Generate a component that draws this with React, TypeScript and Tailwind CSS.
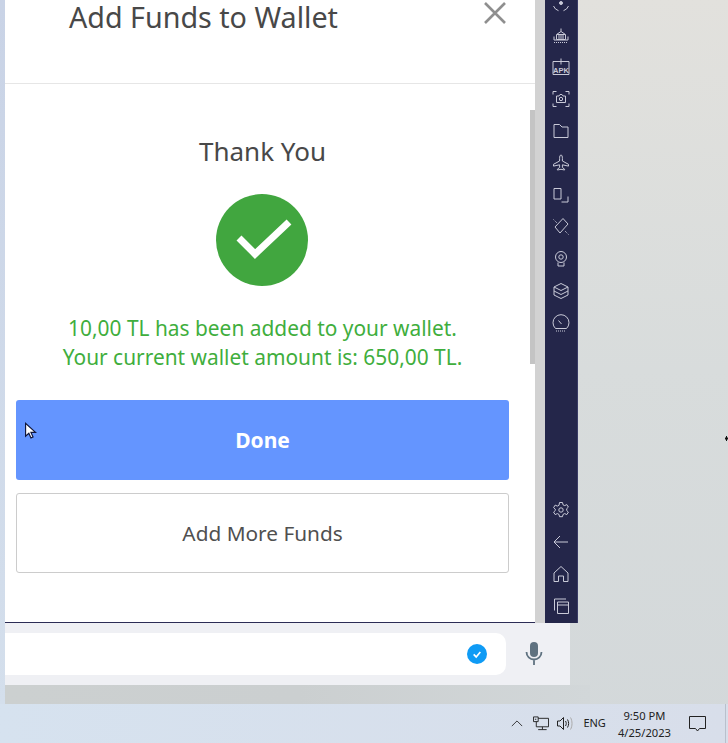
import type { ReactNode } from 'react';

const sidebarTop: ReactNode[] = [
  <g key="dial">
    <path d="M2.500 13a8 8 0 0 0 5 4.700M17.500 13a8 8 0 0 1-5 4.700" />
    <circle cx="10" cy="10" r="1.500" fill="currentColor" />
  </g>,
  <g key="ship">
    <path d="M5.500 9.500 10 6.500l4.500 3v5h-9zM8 9.500v5M10 9.500v5M12 9.500v5M10 3.500v3M6 9.500h8" />
    <path d="M3 11.500v3.500h14v-3.500" />
    <path d="M3 17.500h14" strokeDasharray="1 1" />
  </g>,
  <g key="apk">
    <path d="M7.500 4.500H2v13h16v-13h-5.500M10 1.500v6M7 4.500h6" />
    <text x="10" y="15.500" fontSize="7.500" fontFamily="Liberation Sans, sans-serif" fontWeight="700" textAnchor="middle" fill="currentColor" stroke="none">APK</text>
  </g>,
  <g key="screenshot">
    <path d="M2 5.500V2.500h3.500M14.500 2.500H18v3M18 14.500v3h-3.500M5.500 17.500H2v-3" />
    <path d="M5.500 7h2.500l1-1.500h2l1 1.500h2.500v6.500h-9z" />
    <circle cx="10" cy="10" r="1.700" />
  </g>,
  <path key="folder" d="M3 3.500h5.500l2.500 2.500h6v10.500H3z" />,
  <path key="plane" d="M10 2c1 0 1.400 1.500 1.400 3.500V8l6.100 3.300v1.800l-6.100-1.300v2.700l2.200 1.700V17L10 16.300 6.400 17v-.8l2.200-1.700v-2.700l-6.100 1.300v-1.800L8.600 8V5.500C8.600 3.500 9 2 10 2z" />,
  <path key="resize" d="M3 3.500h7v10.500H3zM10.500 17H17v-5.500" />,
  <g key="rotate">
    <path d="M4 10l8-8.500L17 7l-8 9z" />
    <path d="M2.500 2.500l3.500 3.500M14 14l3.500 3.500" strokeDasharray="1 1" />
  </g>,
  <g key="webcam">
    <circle cx="10" cy="8" r="5.500" />
    <circle cx="10" cy="8" r="2.200" />
    <path d="M7 13.500V17h6v-3.500" />
  </g>,
  <g key="layers">
    <path d="m10 2.500 7 3.500-7 3.500L3 6z" />
    <path d="M3 6v8l7 3.500 7-3.500V6M3 10l7 3.500 7-3.500" />
  </g>,
  <g key="gauge">
    <path d="M4.500 15.500a8 8 0 1 1 11 0z" />
    <path d="m7.500 7.500 3 3.500" />
    <path d="M5 18h10" strokeDasharray="1 1" />
  </g>,
];

const sidebarBottom: ReactNode[] = [
  <g key="settings">
    <circle cx="10" cy="10" r="2.200" />
    <path d="M8.500 2.500h3l.5 2.300 1.700.8 2.100-1 1.600 2.500-1.700 1.600v1.800l1.700 1.600-1.600 2.500-2.100-1-1.700.8-.5 2.300h-3l-.5-2.300-1.700-.8-2.100 1-1.600-2.500 1.700-1.600V9.200L2.600 7.600l1.600-2.500 2.100 1 1.700-.8z" />
  </g>,
  <path key="back" d="M17 10H3M9 4l-6 6 6 6" />,
  <path key="home" d="M3 9v8.500h4.500V12h5v5.500H17V9l-7-6.500z" />,
  <path key="recents" d="M3.500 14.500V3H15M6.500 6h11v11.500h-11zM6.500 9h11" />,
];

function RailIcon({ children }: { children: ReactNode }) {
  return (
    <svg
      viewBox="0 0 20 20"
      fill="none"
      stroke="currentColor"
      strokeWidth="1"
      className="h-[20px] w-[20px] shrink-0"
    >
      {children}
    </svg>
  );
}

function Sidebar() {
  return (
    <aside className="flex h-[623px] w-[33px] shrink-0 flex-col items-center justify-between border-r border-[#3a3c66] bg-[#24264a] pb-[7px] text-[#c9cad8]">
      <div className="-mt-[7px] flex flex-col items-center gap-[12px]">
        {sidebarTop.map((icon, i) => (
          <RailIcon key={i}>{icon}</RailIcon>
        ))}
      </div>
      <div className="flex flex-col items-center gap-[12px]">
        {sidebarBottom.map((icon, i) => (
          <RailIcon key={i}>{icon}</RailIcon>
        ))}
      </div>
    </aside>
  );
}

function Modal() {
  return (
    <section className="flex h-[623px] w-[530px] flex-col border-b border-[#2b2c55] bg-white">
      <header className="flex h-[84px] shrink-0 items-start justify-between border-b border-[#e6e6e6] pr-[29px] pl-[64px]">
        <h1 className="text-[28.7px] leading-[34px] text-[#484848]">Add Funds to Wallet</h1>
        <svg viewBox="0 0 22 22" stroke="#8f8f8f" strokeWidth="2.600" className="mt-[2px] h-[22px] w-[22px]">
          <path d="M1 1l20 20M21 1 1 21" />
        </svg>
      </header>
      <div className="flex min-h-0 flex-1">
        <div className="flex flex-1 flex-col items-center pt-[49px] pr-[21px] pl-[11px]">
          <h2 className="text-[26px] leading-[36px] text-[#484848]">Thank You</h2>
          <svg viewBox="0 0 92 92" className="mt-[25px] mr-[2px] h-[92px] w-[92px]">
            <circle cx="46" cy="46" r="46" fill="#41a63f" />
            <path d="M23 44l16 16 34-32" fill="none" stroke="#ffffff" strokeWidth="7" />
          </svg>
          <p className="mt-[28px] text-center text-[20.9px] leading-[29px] text-[#3fae3d]">
            10,00 TL has been added to your wallet.
            <br />
            Your current wallet amount is: 650,00 TL.
          </p>
          <button className="mt-[28px] h-[80px] w-full shrink-0 rounded-[3px] bg-[#6495ff] pt-[2px] text-[21px] font-bold text-white">
            Done
          </button>
          <button className="mt-[13px] h-[80px] w-full shrink-0 rounded-[3px] border border-[#cccccc] bg-white pt-[2px] text-[20.8px] text-[#505050]">
            Add More Funds
          </button>
        </div>
        <div className="w-[5px] shrink-0 bg-white pt-[26px]">
          <div className="h-[254px] w-full bg-[#c4c4c4]" />
        </div>
      </div>
    </section>
  );
}

function Tray() {
  return (
    <footer className="flex h-[39px] shrink-0 items-center justify-end bg-gradient-to-r from-[#d6e2ef] to-[#d8deea] pr-[2px] text-[#222222]">
      <svg viewBox="0 0 14 8" fill="none" stroke="#222222" className="mr-[10px] h-[7px] w-[12px]">
        <path d="m1 7 6-6 6 6" />
      </svg>
      <svg viewBox="0 0 17 15" fill="none" stroke="#222222" className="mr-[8px] h-[15px] w-[16px]">
        <path d="M.5.500h5v5h-5zM5.500 2h11v9h-13V5.500M10 11v3M5.500 14h9M2 3h1.500" />
      </svg>
      <svg viewBox="0 0 16 13" fill="none" stroke="#222222" className="mr-[10px] h-[13px] w-[16px]">
        <path d="M.5 4v5h2.500l3.500 3.500V.5L3 4zM8.500 4c1 1.500 1 3.500 0 5M10.500 2.500c1.500 2.500 1.500 5.500 0 8" />
        <path d="M13.500.5c2 3.500 2 8.500 0 12" stroke="#aaaaaa" />
      </svg>
      <span className="mr-[12px] text-[11px]">ENG</span>
      <div className="mr-[18px] text-center text-[11.2px] leading-[17px]">
        <div>9:50 PM</div>
        <div>4/25/2023</div>
      </div>
      <svg viewBox="0 0 17 16" fill="none" stroke="#222222" className="mr-[19px] h-[16px] w-[17px]">
        <path d="M.5.500h16v12h-6L8.500 15l-2-2.500h-6z" />
      </svg>
      <div className="h-full w-px bg-[#b9c0cc]" />
    </footer>
  );
}

export default function App() {
  return (
    <div className="relative flex h-[743px] w-[728px] flex-col overflow-hidden bg-gradient-to-b from-[#e2e1dd] via-[#d8dcdc] to-[#d3d8da] font-['Noto_Sans','Open_Sans',sans-serif]">
      <div className="flex flex-1">
        <div className="w-[5px] shrink-0 bg-gradient-to-b from-[#c9d3e6] to-[#d4dfec]" />
        <div className="flex flex-1 flex-col">
          <div className="flex">
            <Modal />
            <div className="h-[623px] w-[10px] shrink-0 bg-[#d2d2d2]" />
            <Sidebar />
          </div>
          <div className="flex h-[62px] w-[565px] items-center bg-[#eff0f4]">
            <div className="flex h-[42px] flex-1 items-center justify-end rounded-r-[10px] bg-white pr-[19px]">
              <span className="flex h-[20px] w-[20px] items-center justify-center rounded-full bg-[#0f9bf5]">
                <svg viewBox="0 0 12 12" fill="none" stroke="#ffffff" strokeWidth="2" className="h-[10px] w-[10px]">
                  <path d="m2 6.500 3 3 5-6" />
                </svg>
              </span>
            </div>
            <svg viewBox="0 0 18 24" className="mr-[27px] ml-[19px] h-[24px] w-[18px]">
              <rect x="5" y="0" width="8" height="15" rx="4" fill="#5f7280" />
              <path d="M1.500 10a7.500 7.500 0 0 0 15 0M9 17.500V23" fill="none" stroke="#5f7280" strokeWidth="1.800" />
            </svg>
          </div>
          <div className="h-[19px] w-[585px] bg-gradient-to-r from-[#ccd0d0] via-[#cbcfd0] to-[#d2d7d9]" />
        </div>
      </div>
      <Tray />
      <svg viewBox="0 0 12 14" className="absolute top-[421px] left-[25px] h-[20px] w-[14px]">
        <path d="M.5.500v11l2.800-2.600 1.800 4 1.800-.8-1.800-3.900H9z" fill="#ffffff" stroke="#10163a" />
      </svg>
      <svg viewBox="0 0 3 5" className="absolute top-[436px] left-[725px] h-[5px] w-[3px]">
        <path d="M1 0h1v1.500h1v2H2V5H1V3.500H0v-2h1z" fill="#111111" />
      </svg>
    </div>
  );
}
